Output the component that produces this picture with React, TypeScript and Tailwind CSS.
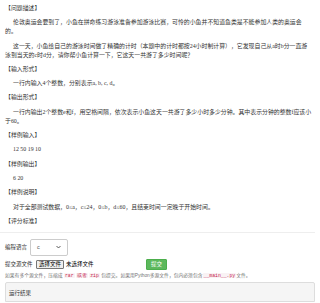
const sections: { title: string; body?: string[][] }[] = [
  {
    title: "【问题描述】",
    body: [
      ["伦敦奥运会要到了，小鱼在拼命练习游泳准备参加游泳比赛，可怜的小鱼并不知道鱼类是不能参加人类的奥运会", "的。"],
      ["这一天，小鱼给自己的游泳时间做了精确的计时（本题中的计时都按24小时制计算），它发现自己从a时b分一直游泳到当天的c时d分，请你帮小鱼计算一下，它这天一共游了多少时间呢？"],
    ],
  },
  { title: "【输入形式】", body: [["一行内输入4个整数，分别表示a, b, c, d。"]] },
  {
    title: "【输出形式】",
    body: [
      ["一行内输出2个整数e和f，用空格间隔，依次表示小鱼这天一共游了多少小时多少分钟。其中表示分钟的整数f应该小于60。"],
    ],
  },
  { title: "【样例输入】", body: [["12 50 19 10"]] },
  { title: "【样例输出】", body: [["6 20"]] },
  {
    title: "【样例说明】",
    body: [["对于全部测试数据，0≤a，c≤24，0≤b，d≤60，且结束时间一定晚于开始时间。"]],
  },
  { title: "【评分标准】" },
];

function Code({ children }: { children: string }) {
  return (
    <code className="font-['Liberation_Mono',monospace] text-[#c7254e] bg-[#f9f2f4] px-[1px] rounded-[1px]">
      {children}
    </code>
  );
}

export default function App() {
  return (
    <div className="w-[320px] h-[303px] overflow-hidden bg-white font-['Liberation_Sans','Noto_Sans_CJK_SC',sans-serif] text-[#333]">
      {/* problem statement */}
      <div className="pl-[5px] pr-[8px] pt-[4px] font-['Liberation_Serif','Noto_Sans_CJK_SC',serif] text-[5.9px] leading-[9px] flex flex-col gap-[5.3px]">
        {sections.map((s) => (
          <div key={s.title} className="flex flex-col gap-[5.3px]">
            <p>{s.title}</p>
            {s.body?.map((lines, i) => (
              <p key={i} className="indent-[8px]">
                {lines.map((l, j) => (
                  <span key={j}>
                    {j > 0 && <br />}
                    {l}
                  </span>
                ))}
              </p>
            ))}
          </div>
        ))}
      </div>

      <hr className="mt-[6px] mr-[5px] border-t border-[#eee]" />

      {/* submit form */}
      <div className="px-[5px] pt-[6px] text-[5.5px]">
        <div className="flex items-center gap-[2px]">
          <span>编程语言</span>
          <div className="ml-[1px] w-[38px] h-[17px] border border-[#ccc] rounded-[2px] flex items-center justify-between px-[6px]">
            <span className="text-[#555]">c</span>
            <svg width="5" height="4" viewBox="0 0 10 6" fill="none">
              <path d="M1 1l4 4 4-4" stroke="#333" strokeWidth="1.6" />
            </svg>
          </div>
        </div>

        <div className="mt-[3px] flex items-center">
          <span className="w-[31px]">提交源文件</span>
          <div className="w-[110px] flex items-center gap-[2px]">
            <span className="h-[9px] px-[2px] flex items-center border border-[#767676] bg-[#efefef] rounded-[1px] text-black">
              选择文件
            </span>
            <span className="text-black">未选择文件</span>
          </div>
          <button className="h-[11px] px-[4px] bg-[#5cb85c] border border-[#4cae4c] rounded-[1px] text-white text-[5.5px] leading-none">
            提交
          </button>
        </div>

        <p className="mt-[2px] text-[4.8px] leading-[7px] text-[#737373] whitespace-nowrap">
          如果有多个源文件，压缩成 <Code>rar</Code> <Code>或者</Code> <Code>zip</Code> 包提交。如果用Python多源文件，包内必须包含<Code>__main__.py</Code>文件。
        </p>

        <div className="mt-[3px] h-[20px] bg-[#f5f5f5] border border-[#ddd] rounded-t-[2px] px-[3px] pt-[6px] text-[5.5px]">
          运行结果
        </div>
      </div>
    </div>
  );
}
